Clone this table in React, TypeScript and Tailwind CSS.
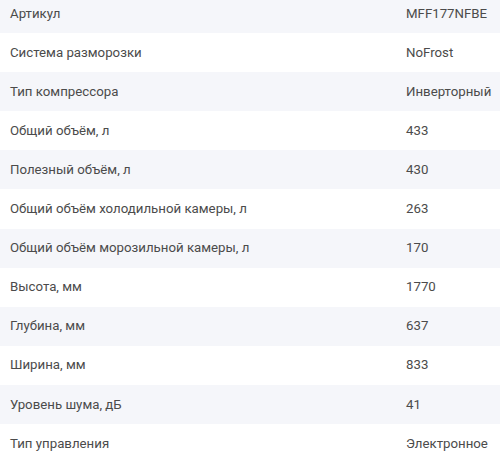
const rows: [string, string][] = [
  ['Артикул', 'MFF177NFBE'],
  ['Система разморозки', 'NoFrost'],
  ['Тип компрессора', 'Инверторный'],
  ['Общий объём, л', '433'],
  ['Полезный объём, л', '430'],
  ['Общий объём холодильной камеры, л', '263'],
  ['Общий объём морозильной камеры, л', '170'],
  ['Высота, мм', '1770'],
  ['Глубина, мм', '637'],
  ['Ширина, мм', '833'],
  ['Уровень шума, дБ', '41'],
  ['Тип управления', 'Электронное'],
];

export default function App() {
  return (
    <div className="w-[500px] h-[459px] overflow-hidden bg-white font-['Roboto',sans-serif] text-[13.25px] text-[#4b4b4b]">
      <div className="-mt-[6px]">
        {rows.map(([label, value], i) => (
          <div
            key={label}
            className={`flex items-center h-[39.1px] ${i % 2 === 0 ? 'bg-[#f5f6fa]' : 'bg-white'}`}
          >
            <div className="flex-1 pl-[10px]">{label}</div>
            <div className="w-[94px] shrink-0">{value}</div>
          </div>
        ))}
      </div>
    </div>
  );
}
